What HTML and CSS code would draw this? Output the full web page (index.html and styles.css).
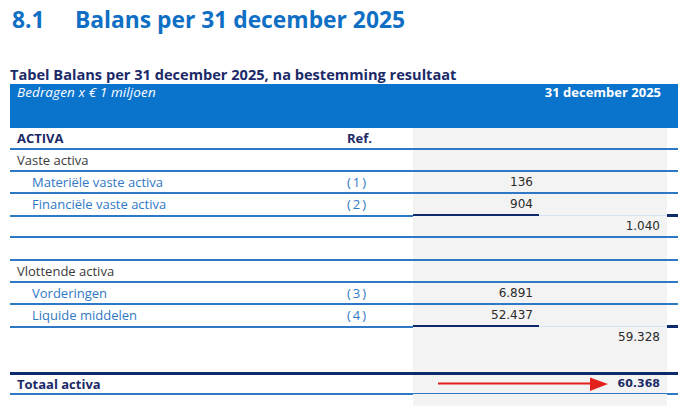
FILE: index.html
```html
<!DOCTYPE html>
<html lang="nl">
<head>
<meta charset="utf-8">
<title>Balans per 31 december 2025</title>
<link rel="stylesheet" href="styles.css">
</head>
<body>
<h1 class="title"><span class="title-num">8.1</span><span>Balans per 31 december 2025</span></h1>
<h2 class="caption">Tabel Balans per 31 december 2025, na bestemming resultaat</h2>
<div class="table">
  <div class="row band">
    <div class="band-left">Bedragen x € 1 miljoen</div>
    <div class="band-right">31 december 2025</div>
    <div></div>
  </div>

  <div class="row">
    <div class="c lbl strong">ACTIVA</div>
    <div class="c ref strong">Ref.</div>
    <div class="c amt g"></div>
    <div class="c amt g"></div>
    <div class="c"></div>
  </div>
  <div class="row">
    <div class="c lbl">Vaste activa</div>
    <div class="c ref"></div>
    <div class="c amt g"></div>
    <div class="c amt g"></div>
    <div class="c"></div>
  </div>
  <div class="row">
    <div class="c lbl sub">Materiële vaste activa</div>
    <div class="c ref num">(1)</div>
    <div class="c amt g">136</div>
    <div class="c amt g"></div>
    <div class="c"></div>
  </div>
  <div class="row">
    <div class="c lbl sub">Financiële vaste activa</div>
    <div class="c ref num">(2)</div>
    <div class="c amt g sum">904</div>
    <div class="c amt g faint"></div>
    <div class="c sum"></div>
  </div>
  <div class="row">
    <div class="c lbl"></div>
    <div class="c ref"></div>
    <div class="c amt g"></div>
    <div class="c amt2 g">1.040</div>
    <div class="c"></div>
  </div>
  <div class="row tall">
    <div class="c lbl"></div>
    <div class="c ref"></div>
    <div class="c amt g"></div>
    <div class="c amt g"></div>
    <div class="c"></div>
  </div>
  <div class="row">
    <div class="c lbl">Vlottende activa</div>
    <div class="c ref"></div>
    <div class="c amt g"></div>
    <div class="c amt g"></div>
    <div class="c"></div>
  </div>
  <div class="row">
    <div class="c lbl sub">Vorderingen</div>
    <div class="c ref num">(3)</div>
    <div class="c amt g">6.891</div>
    <div class="c amt g"></div>
    <div class="c"></div>
  </div>
  <div class="row">
    <div class="c lbl sub">Liquide middelen</div>
    <div class="c ref num">(4)</div>
    <div class="c amt g sum">52.437</div>
    <div class="c amt g faint"></div>
    <div class="c sum"></div>
  </div>
  <div class="row open">
    <div class="c lbl"></div>
    <div class="c ref"></div>
    <div class="c amt g"></div>
    <div class="c amt2 g">59.328</div>
    <div class="c"></div>
  </div>
  <div class="row open tall">
    <div class="c lbl"></div>
    <div class="c ref"></div>
    <div class="c amt g"></div>
    <div class="c amt g"></div>
    <div class="c"></div>
  </div>
  <div class="row total">
    <div class="c lbl strong">Totaal activa</div>
    <div class="c ref"></div>
    <div class="c amt g"></div>
    <div class="c amt2 g strong-num">60.368</div>
    <div class="c"></div>
  </div>
  <div class="row open">
    <div class="c lbl"></div>
    <div class="c ref"></div>
    <div class="c amt g"></div>
    <div class="c amt g"></div>
    <div class="c"></div>
  </div>
</div>
<svg class="arrow" width="176" height="18" viewBox="0 0 176 18" aria-hidden="true">
  <line x1="2" y1="7.5" x2="158" y2="7.5" stroke="#e3211d" stroke-width="2"/>
  <polygon points="154,1.5 172,8 154,15" fill="#e3211d"/>
</svg>
</body>
</html>
```

FILE: styles.css
```css
html, body {
  margin: 0;
  padding: 0;
  background: #ffffff;
}
body {
  position: relative;
  width: 680px;
  height: 406px;
  overflow: hidden;
  font-family: "Open Sans", "Liberation Sans", sans-serif;
}
.title {
  margin: 0;
  padding: 6px 0 0 12px;
  font-size: 22.8px;
  line-height: 28px;
  font-weight: 700;
  color: #0f6fc4;
  white-space: nowrap;
}
.title-num {
  display: inline-block;
  width: 63px;
}
.caption {
  margin: 31px 0 1px 10px;
  font-size: 14.6px;
  line-height: 18px;
  font-weight: 700;
  color: #1b2a68;
  white-space: nowrap;
}
.table {
  margin-left: 10px;
  width: 668px;
}
.row {
  display: grid;
  grid-template-columns: 331px 72px 126px 128px 11px;
  height: 22px;
}
.row.tall {
  height: 23px;
}
.band {
  grid-template-columns: 403px 254px 11px;
  height: 44px;
  background: #0a73cc;
  color: #ffffff;
  font-size: 13px;
  line-height: 15px;
}
.band-left {
  padding: 1px 0 0 7px;
  font-style: italic;
  font-size: 13.5px;
  letter-spacing: 0.1px;
}
.band-right {
  padding: 1px 6px 0 0;
  text-align: right;
  font-weight: 700;
}
.c {
  box-sizing: border-box;
  height: 100%;
  border-bottom: 2px solid #2e79c6;
  font-size: 13px;
  line-height: 20px;
  color: #3a3a3a;
  white-space: nowrap;
}
.row.open .c {
  border-bottom: none;
}
.row.total .c {
  border-top: 3px solid #0e2a6b;
  line-height: 18px;
}
.g {
  background: #f3f3f3;
}
.lbl {
  padding-left: 7px;
}
.lbl.sub {
  padding-left: 22px;
  color: #2f78c4;
}
.ref {
  padding-left: 6px;
  color: #2f78c4;
}
.ref.num {
  letter-spacing: 2px;
}
.strong {
  font-weight: 700;
  color: #1b2a68;
}
.amt, .amt2 {
  text-align: right;
  font-family: "DejaVu Sans", "Liberation Sans", sans-serif;
  font-size: 12px;
  color: #2a2a2a;
}
.amt {
  padding-right: 6px;
}
.amt2 {
  padding-right: 7px;
}
.strong-num {
  font-weight: 700;
  font-size: 11px;
  color: #1b2a68;
}
.c.sum {
  border-bottom: 3px solid #0e2a6b;
}
.c.faint {
  border-bottom: 2px solid #d6e4f2;
}
.arrow {
  position: absolute;
  left: 436px;
  top: 376px;
}
```
